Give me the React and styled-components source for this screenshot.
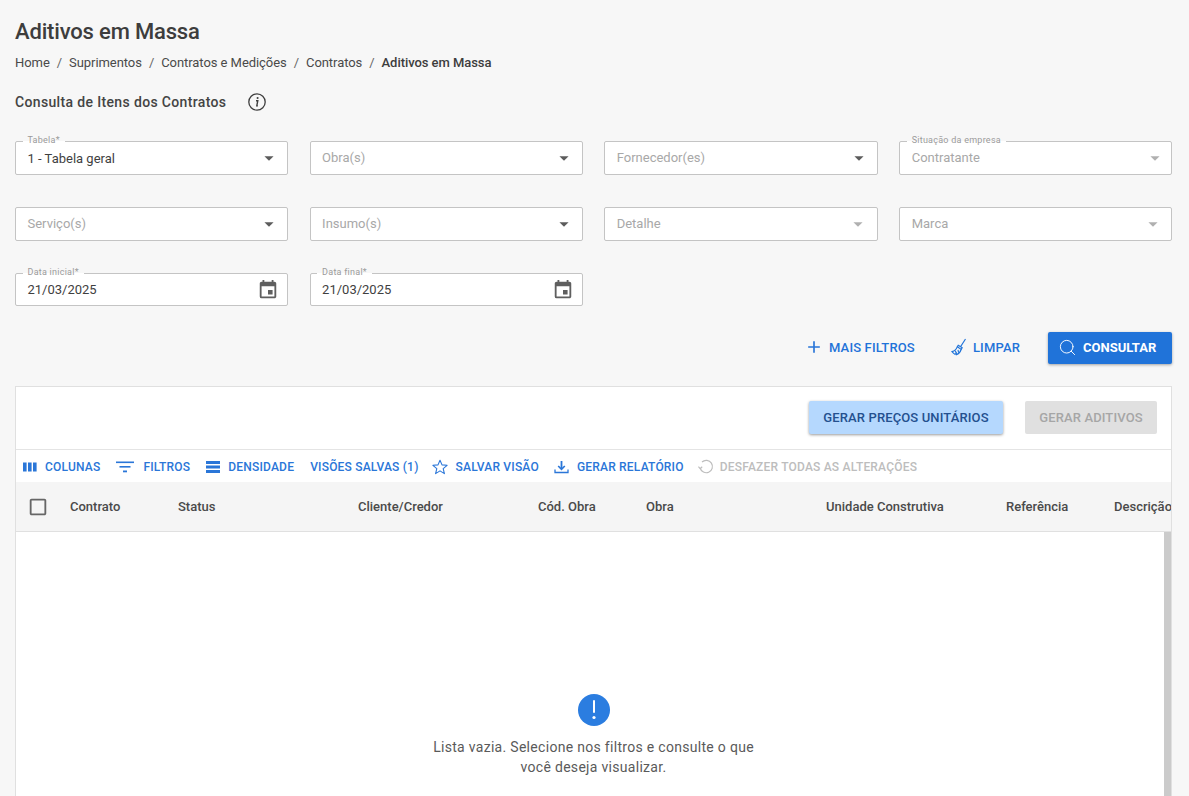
import React from 'react';
import styled, { createGlobalStyle } from 'styled-components';
import { MdArrowDropDown, MdEvent, MdAdd, MdCheckBoxOutlineBlank } from 'react-icons/md';
import { Search } from 'lucide-react';

const GlobalStyle = createGlobalStyle`
  html, body {
    margin: 0;
    padding: 0;
    background: #f7f7f7;
    font-family: Roboto, "Liberation Sans", sans-serif;
    overflow: hidden;
  }
  * { box-sizing: border-box; }
`;

const Page = styled.div`
  height: 796px;
  overflow: hidden;
  padding: 19px 17px 0 15px;
  color: #3f3f3f;
`;

const Title = styled.h1`
  margin: 0;
  font-size: 22px;
  line-height: 26px;
  font-weight: 500;
  letter-spacing: -0.17px;
  color: #3d3d3d;
`;

const Breadcrumb = styled.nav`
  display: flex;
  align-items: center;
  margin-top: 9px;
  font-size: 13px;
  line-height: 18px;
  letter-spacing: -0.06px;
  color: #4a4a4a;
`;

const Sep = styled.span`
  margin: 0 7px;
  color: #666;
`;

const Current = styled.strong`
  font-weight: 500;
  color: #3d3d3d;
`;

const SectionHead = styled.div`
  display: flex;
  align-items: center;
  height: 20px;
  margin-top: 20px;
  gap: 21px;
`;

const SectionTitle = styled.h2`
  margin: 0;
  font-size: 14px;
  font-weight: 500;
  letter-spacing: 0.35px;
  color: #444;
`;

const FilterGrid = styled.div`
  display: grid;
  grid-template-columns: 273px 273px 273.4px 1fr;
  column-gap: 21.6px;
  grid-auto-rows: 34px;
  row-gap: 32px;
  margin-top: 29px;
`;

const Field = styled.div`
  position: relative;
  display: flex;
  align-items: center;
  height: ${p => (p.$date ? '33px' : '34px')};
  padding: 0 ${p => p.$pr}px 0 11.5px;
  background: #fff;
  border: 1px solid #c4c4c4;
  border-radius: 2px;
`;

const FieldLabel = styled.span`
  position: absolute;
  top: -7px;
  left: 6.5px;
  padding: 0 5px;
  font-size: 9px;
  line-height: 10px;
  letter-spacing: 0.25px;
  color: #9b9b9b;
  background: linear-gradient(to bottom, #f7f7f7 60%, #fff 60%);
`;

const FieldValue = styled.span`
  flex: 1;
  font-size: 13px;
  padding-bottom: ${p => (p.$muted ? '2px' : '0')};
  color: ${p => (p.$muted ? '#a8a8a8' : '#3f3f3f')};
`;

const Arrow = styled(MdArrowDropDown)`
  color: ${p => (p.$off ? '#b0b0b0' : '#5c5c5c')};
  font-size: 22px;
`;

const Calendar = styled(MdEvent)`
  color: #5f5f5f;
  font-size: 22px;
`;

const Actions = styled.div`
  display: flex;
  justify-content: flex-end;
  align-items: center;
  margin-top: 25px;
  height: 32px;
`;

const TextAction = styled.button`
  display: flex;
  align-items: center;
  gap: ${p => p.$gap}px;
  margin-right: ${p => p.$mr}px;
  padding: 0 0 2px;
  border: 0;
  background: none;
  font: 500 13px Roboto, sans-serif;
  letter-spacing: 0.15px;
  color: #1f73d9;
`;

const PrimaryButton = styled.button`
  display: flex;
  align-items: center;
  gap: 6px;
  width: 124px;
  height: 32px;
  padding: 0 0 2px 10px;
  border: 0;
  border-radius: 2px;
  background: #2073d9;
  color: #fff;
  font: 700 13px Roboto, sans-serif;
  box-shadow: 0 1px 3px rgba(0, 0, 0, 0.35);
`;

const Card = styled.section`
  position: relative;
  margin-top: 22px;
  height: 420px;
  background: #fff;
  border: 1px solid #e0e0e0;
  overflow: hidden;
`;

const CardTop = styled.div`
  display: flex;
  justify-content: flex-end;
  align-items: center;
  gap: 22px;
  height: 63px;
  padding: 0 14px 2px 0;
  border-bottom: 1px solid #e4e4e4;
`;

const GenButton = styled.button`
  height: 33px;
  width: ${p => p.$w}px;
  padding: 0;
  border: 0;
  border-radius: 2px;
  font: 500 13px Roboto, sans-serif;
  letter-spacing: 0.12px;
  color: ${p => (p.$off ? '#a6a6a6' : '#24508f')};
  background: ${p => (p.$off ? '#e0e0e0' : '#b5d8fe')};
  box-shadow: ${p => (p.$off ? 'none' : '0 1px 3px rgba(0, 0, 0, 0.4)')};
`;

const Toolbar = styled.div`
  display: flex;
  align-items: center;
  height: 32px;
  padding: 2px 0 0 6px;
`;

const ToolItem = styled.button`
  display: flex;
  align-items: center;
  gap: ${p => p.$gap ?? 8}px;
  margin-right: ${p => p.$mr ?? 15}px;
  padding: 0;
  border: 0;
  background: none;
  font: 500 12px Roboto, sans-serif;
  letter-spacing: 0.2px;
  color: ${p => (p.$off ? '#bdbdbd' : '#2a76d8')};
  white-space: nowrap;
`;

const HeaderRow = styled.div`
  display: grid;
  grid-template-columns: 54px 108px 180px 180px 108px 180px 180px 108px 100px;
  align-items: center;
  height: 50px;
  background: #f5f5f5;
  border-bottom: 1px solid #e0e0e0;
  color: #4a4a4a;
  font-size: 13px;
  font-weight: 500;
  overflow: hidden;
`;

const CheckCell = styled.div`
  display: flex;
  padding-left: 11px;
  color: #666;
`;

const HeaderCell = styled.div`
  white-space: nowrap;
`;

const Scrollbar = styled.div`
  position: absolute;
  top: 145px;
  right: 0;
  bottom: 0;
  width: 7px;
  background: #cbcbcb;
`;

const Empty = styled.div`
  display: flex;
  flex-direction: column;
  align-items: center;
  padding-top: 162px;
`;

const EmptyIcon = styled.div`
  display: flex;
  align-items: center;
  justify-content: center;
  width: 32px;
  height: 32px;
  border-radius: 50%;
  background: #2b7de0;
`;

const EmptyText = styled.p`
  margin: 11px 0 0;
  width: 340px;
  text-align: center;
  font-size: 14px;
  line-height: 20px;
  letter-spacing: 0.3px;
  color: #5a5a5a;
`;

const InfoIcon = () => (
  <svg width="20" height="20" viewBox="0 0 20 20" fill="none">
    <circle cx="10" cy="10" r="8.2" stroke="#3f3f3f" strokeWidth="1.3" />
    <circle cx="10.6" cy="6" r="1.05" fill="#3f3f3f" />
    <path d="M9 8.7h1.8l-1 5.2h1.1" stroke="#3f3f3f" strokeWidth="1.4" />
  </svg>
);

const BroomIcon = () => (
  <svg width="16" height="18" viewBox="0 0 16 18" fill="none" stroke="#1f73d9" strokeWidth="1.1">
    <path d="M14.5 1 9.6 8.6" />
    <path d="M7.2 7.2l4 2.6-.9 1.6-4-2.6z" />
    <path d="M6.2 8.9C5.6 11 3.6 13 1 13.6c1 1.2 1.9 2 3 2.8 .6-.4 1-.9 1.3-1.2l.1 1.6c1.7-.6 4-2.8 4.7-5.3" />
    <path d="M4.3 12.8l1 2.4M7 11.8l.6 2.8" />
  </svg>
);

const ColumnsIcon = () => (
  <svg width="16" height="10" viewBox="0 0 16 10" fill="#2a76d8">
    <rect x="1" y="0.5" width="3.6" height="9" />
    <rect x="6" y="0.5" width="3.6" height="9" />
    <rect x="11" y="0.5" width="3.6" height="9" />
  </svg>
);

const FilterIcon = () => (
  <svg width="18" height="12" viewBox="0 0 18 12" fill="#2a76d8">
    <rect x="0" y="0.5" width="18" height="1.6" />
    <rect x="3.5" y="5" width="11" height="1.6" />
    <rect x="7" y="9.5" width="4" height="1.8" />
  </svg>
);

const DensityIcon = () => (
  <svg width="14" height="12" viewBox="0 0 14 12" fill="#2a76d8">
    <rect y="0" width="14" height="3" />
    <rect y="4.5" width="14" height="3" />
    <rect y="9" width="14" height="3" />
  </svg>
);

const StarIcon = () => (
  <svg width="16" height="16" viewBox="0 0 16 16" fill="none" stroke="#2a76d8" strokeWidth="1.1" strokeLinejoin="round">
    <path d="M8 1.2l2 4.7 5.1.4-3.9 3.3 1.2 5-4.4-2.7-4.4 2.7 1.2-5L.9 6.3 6 5.9z" />
  </svg>
);

const DownloadIcon = () => (
  <svg width="15" height="14" viewBox="0 0 15 14" fill="none" stroke="#2a76d8">
    <path d="M7.5 1v7.5" strokeWidth="1.8" />
    <path d="M4.2 6l3.3 3.4L10.8 6" strokeWidth="1.6" />
    <path d="M1 9.5v3h13v-3" strokeWidth="1.3" />
  </svg>
);

const UndoIcon = () => (
  <svg width="16" height="16" viewBox="0 0 16 16" fill="none" stroke="#bdbdbd" strokeWidth="1.2">
    <path d="M4 3A6.2 6.2 0 1 1 2.2 9" />
    <path d="M.4 7.6l1.8 2 2-1.8" />
  </svg>
);

const filters = [
  { label: 'Tabela*', value: '1 - Tabela geral', pr: 7 },
  { value: 'Obra(s)', muted: true, pr: 7 },
  { value: 'Fornecedor(es)', muted: true, pr: 7 },
  { label: 'Situação da empresa', value: 'Contratante', muted: true, off: true, pr: 5 },
  { value: 'Serviço(s)', muted: true, pr: 7 },
  { value: 'Insumo(s)', muted: true, pr: 7 },
  { value: 'Detalhe', muted: true, off: true, pr: 8 },
  { value: 'Marca', muted: true, off: true, pr: 7 },
  { label: 'Data inicial*', value: '21/03/2025', date: true, pr: 8 },
  { label: 'Data final*', value: '21/03/2025', date: true, pr: 8 },
];

const columns = ['Contrato', 'Status', 'Cliente/Credor', 'Cód. Obra', 'Obra', 'Unidade Construtiva', 'Referência', 'Descrição'];

export default function App() {
  return (
    <Page>
      <GlobalStyle />
      <Title>Aditivos em Massa</Title>
      <Breadcrumb>
        Home<Sep>/</Sep>Suprimentos<Sep>/</Sep>Contratos e Medições<Sep>/</Sep>Contratos<Sep>/</Sep>
        <Current>Aditivos em Massa</Current>
      </Breadcrumb>
      <SectionHead>
        <SectionTitle>Consulta de Itens dos Contratos</SectionTitle>
        <InfoIcon />
      </SectionHead>

      <FilterGrid>
        {filters.map((f, i) => (
          <Field key={i} $date={f.date} $pr={f.pr}>
            {f.label && <FieldLabel>{f.label}</FieldLabel>}
            <FieldValue $muted={f.muted}>{f.value}</FieldValue>
            {f.date ? <Calendar /> : <Arrow $off={f.off} />}
          </Field>
        ))}
      </FilterGrid>

      <Actions>
        <TextAction $gap={5} $mr={36}>
          <MdAdd size={20} color="#2a76d8" />
          MAIS FILTROS
        </TextAction>
        <TextAction $gap={6} $mr={28}>
          <BroomIcon />
          LIMPAR
        </TextAction>
        <PrimaryButton>
          <Search size={19} strokeWidth={1.2} />
          CONSULTAR
        </PrimaryButton>
      </Actions>

      <Card>
        <CardTop>
          <GenButton $w={194}>GERAR PREÇOS UNITÁRIOS</GenButton>
          <GenButton $w={132} $off>GERAR ADITIVOS</GenButton>
        </CardTop>
        <Toolbar>
          <ToolItem $gap={7} $mr={16}>
            <ColumnsIcon />
            COLUNAS
          </ToolItem>
          <ToolItem $gap={9} $mr={16}>
            <FilterIcon />
            FILTROS
          </ToolItem>
          <ToolItem $gap={8} $mr={16}>
            <DensityIcon />
            DENSIDADE
          </ToolItem>
          <ToolItem $gap={0} $mr={13}>VISÕES SALVAS (1)</ToolItem>
          <ToolItem $gap={8} $mr={15}>
            <StarIcon />
            SALVAR VISÃO
          </ToolItem>
          <ToolItem $gap={8} $mr={14}>
            <DownloadIcon />
            GERAR RELATÓRIO
          </ToolItem>
          <ToolItem $off $gap={6}>
            <UndoIcon />
            DESFAZER TODAS AS ALTERAÇÕES
          </ToolItem>
        </Toolbar>
        <HeaderRow>
          <CheckCell>
            <MdCheckBoxOutlineBlank size={22} />
          </CheckCell>
          {columns.map(c => (
            <HeaderCell key={c}>{c}</HeaderCell>
          ))}
        </HeaderRow>
        <Scrollbar />
        <Empty>
          <EmptyIcon>
            <svg width="6" height="22" viewBox="0 0 6 22" fill="#fff">
              <rect x="2" y="1" width="2" height="13" rx="1" />
              <circle cx="3" cy="18.5" r="1.6" />
            </svg>
          </EmptyIcon>
          <EmptyText>
            Lista vazia. Selecione nos filtros e consulte o que você deseja visualizar.
          </EmptyText>
        </Empty>
      </Card>
    </Page>
  );
}
